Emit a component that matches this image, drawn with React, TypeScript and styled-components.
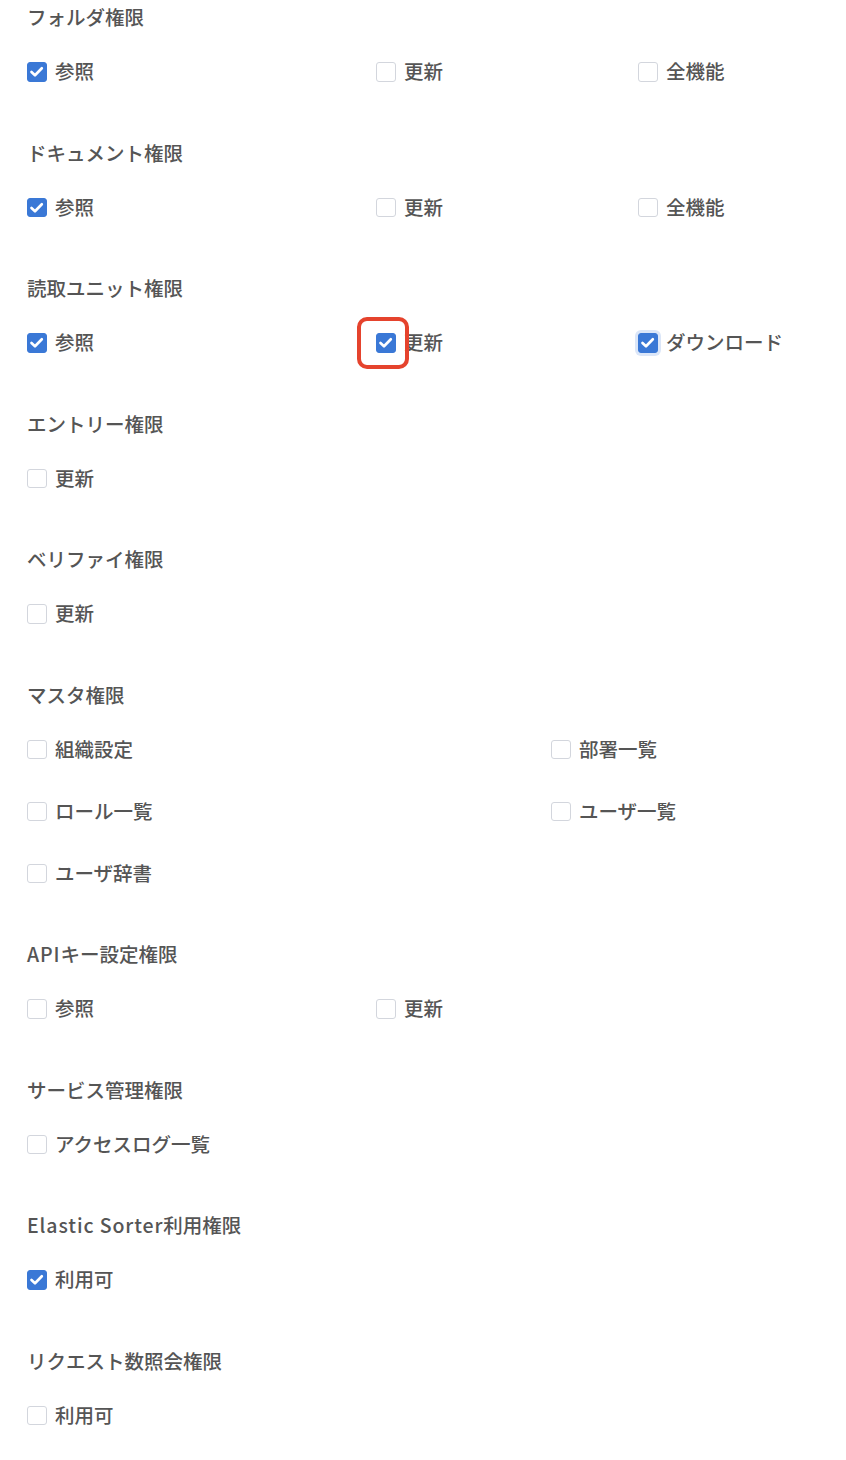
import React from "react";
import styled, { createGlobalStyle } from "styled-components";

const Global = createGlobalStyle`
  html, body { margin: 0; padding: 0; background: #ffffff; }
  body { font-family: "Noto Sans CJK JP", "Noto Sans", sans-serif; }
`;

const Page = styled.div`
  padding: 0 27px;
  display: flex;
  flex-direction: column;
`;

const Section = styled.section`
  display: flex;
  flex-direction: column;
  gap: 16px;
  margin-bottom: 43.5px;
`;

const Heading = styled.h3`
  margin: 0;
  height: 36px;
  line-height: 34px;
  font-size: 19.5px;
  font-weight: 500;
  color: #555555;
`;

const Latin = styled.span`
  letter-spacing: 0.9px;
`;

const Rows = styled.div<{ $cols: number }>`
  display: grid;
  grid-template-columns: ${(p) => (p.$cols === 2 ? "524px 1fr" : "349px 262px 1fr")};
  row-gap: 22px;
`;

const Item = styled.label`
  display: flex;
  align-items: center;
  gap: 8.5px;
  height: 40px;
  font-size: 19.5px;
  font-weight: 500;
  color: #555555;
  cursor: pointer;
`;

const Text = styled.span`
  line-height: 1;
  margin-top: -2px;
`;

const BoxWrap = styled.span`
  position: relative;
  display: inline-flex;
  flex: none;
`;

const Box = styled.span<{ $checked: boolean; $focus?: boolean }>`
  width: 19.5px;
  height: 19.5px;
  box-sizing: border-box;
  border-radius: 3px;
  display: inline-flex;
  align-items: center;
  justify-content: center;
  background: ${(p) => (p.$checked ? "#3a78d6" : "#ffffff")};
  border: 1px solid ${(p) => (p.$checked ? "#3a78d6" : "#d3d6dd")};
  box-shadow: ${(p) => (p.$focus ? "0 0 0 3px #dbe6f8" : "none")};
`;

const Highlight = styled.span`
  position: absolute;
  left: -19px;
  top: -16px;
  width: 52px;
  height: 52px;
  box-sizing: border-box;
  border: 4px solid #e5432d;
  border-radius: 10px;
  pointer-events: none;
`;

const Check = () => (
  <svg width="19.5" height="19.5" viewBox="0 0 20 20" aria-hidden style={{ margin: -1 }}>
    <polyline
      points="4.6,10.2 8.2,13.6 15.2,6.4"
      fill="none"
      stroke="#ffffff"
      strokeWidth="2.7"
      strokeLinecap="round"
      strokeLinejoin="round"
    />
  </svg>
);

type Opt = { label: string; checked?: boolean; focus?: boolean; highlight?: boolean };
type Sec = { title: React.ReactNode; key: string; cols?: number; items: Opt[] };

const sections: Sec[] = [
  { key: "f", title: "フォルダ権限", items: [{ label: "参照", checked: true }, { label: "更新" }, { label: "全機能" }] },
  { key: "d", title: "ドキュメント権限", items: [{ label: "参照", checked: true }, { label: "更新" }, { label: "全機能" }] },
  {
    key: "r",
    title: "読取ユニット権限",
    items: [
      { label: "参照", checked: true },
      { label: "更新", checked: true, highlight: true },
      { label: "ダウンロード", checked: true, focus: true },
    ],
  },
  { key: "e", title: "エントリー権限", items: [{ label: "更新" }] },
  { key: "v", title: "ベリファイ権限", items: [{ label: "更新" }] },
  {
    key: "m",
    title: "マスタ権限",
    cols: 2,
    items: [
      { label: "組織設定" },
      { label: "部署一覧" },
      { label: "ロール一覧" },
      { label: "ユーザ一覧" },
      { label: "ユーザ辞書" },
    ],
  },
  {
    key: "a",
    title: (
      <>
        <Latin>API</Latin>キー設定権限
      </>
    ),
    items: [{ label: "参照" }, { label: "更新" }],
  },
  { key: "s", title: "サービス管理権限", items: [{ label: "アクセスログ一覧" }] },
  {
    key: "es",
    title: (
      <>
        <Latin>Elastic Sorter</Latin>利用権限
      </>
    ),
    items: [{ label: "利用可", checked: true }],
  },
  { key: "q", title: "リクエスト数照会権限", items: [{ label: "利用可" }] },
];

const CheckItem = ({ o }: { o: Opt }) => (
  <Item>
    <BoxWrap>
      <Box $checked={!!o.checked} $focus={o.focus}>
        {o.checked && <Check />}
      </Box>
      {o.highlight && <Highlight />}
    </BoxWrap>
    <Text>{o.label}</Text>
  </Item>
);

export default function App() {
  return (
    <>
      <Global />
      <Page>
        {sections.map((s) => (
          <Section key={s.key}>
            <Heading>{s.title}</Heading>
            <Rows $cols={s.cols ?? 3}>
              {s.items.map((o, i) => (
                <CheckItem key={i} o={o} />
              ))}
            </Rows>
          </Section>
        ))}
      </Page>
    </>
  );
}
